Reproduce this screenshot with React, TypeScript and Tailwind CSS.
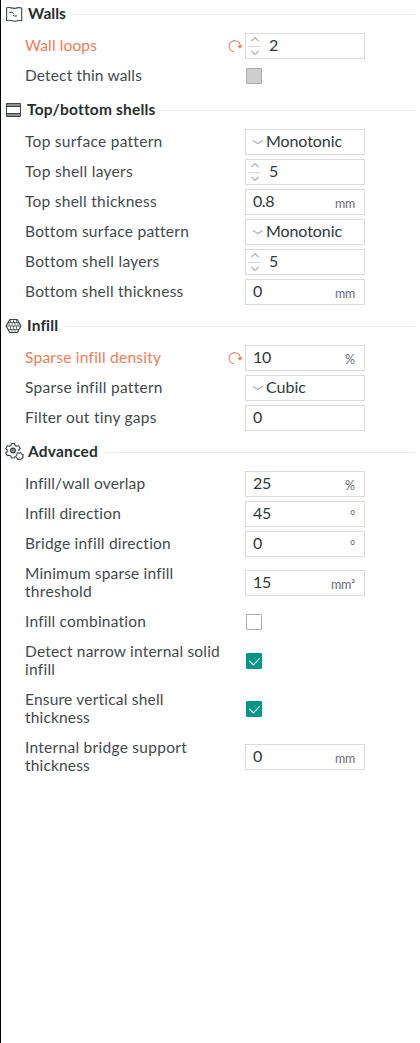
import { useLayoutEffect, useRef } from "react";

type LineProps = { text: string; width: number; className?: string };

/* One line of text, tracked so that it fills the given width. */
function Line({ text, width, className = "" }: LineProps) {
  const ref = useRef<HTMLSpanElement>(null);
  useLayoutEffect(() => {
    const el = ref.current;
    if (!el) return;
    el.style.letterSpacing = "0px";
    const natural = el.getBoundingClientRect().width;
    el.style.letterSpacing = `${(width - natural) / text.length}px`;
  }, [text, width]);
  return (
    <span className={`block w-max whitespace-nowrap ${className}`}>
      <span ref={ref} className="inline-block">{text}</span>
    </span>
  );
}

function WallsIcon() {
  return (
    <svg width="18" height="18" viewBox="0 0 18 18" fill="none" stroke="#3c4444" strokeWidth="1.1" strokeLinejoin="round">
      <path d="M1.600 2.700C5 1.600 7 4 10.500 3.200C13 2.400 14.500 2.500 16.700 3V15.700C13.500 14.700 12 17 8.500 16C6 15.300 4 14.800 1.600 15.500Z" />
      <path d="M4.300 7.300L7 7.200L8.600 8.700M8 10.200L9.500 11L12 10.900" strokeWidth="1" />
    </svg>
  );
}

function ShellsIcon() {
  return (
    <svg width="18" height="18" viewBox="0 0 18 18" fill="none">
      <path d="M1.500 2.500H15.500V15.500H1.500Z" stroke="#3c4444" />
      <path d="M2 3H15V5H2ZM2 13H15V15H2Z" fill="#8c9191" />
      <path d="M1.500 5.500H15.500M1.500 12.500H15.500" stroke="#3c4444" />
    </svg>
  );
}

function InfillIcon() {
  return (
    <svg width="18" height="18" viewBox="0 0 18 18" fill="none" stroke="#3c4444">
      <path d="M4.800 2.500H12.200L15.900 9L12.200 15.500H4.800L1.100 9Z" strokeWidth="1.200" strokeLinejoin="round" />
      <path d="M3 5.500H14M1.500 9H15.500M3 12.500H14M5.500 2.500V5.500M8.500 2.500V5.500M11.500 2.500V5.500M4 5.500V9M7 5.500V9M10 5.500V9M13 5.500V9M5.500 9V12.500M8.500 9V12.500M11.500 9V12.500M7 12.500V15.500M10 12.500V15.500" strokeWidth="1" strokeOpacity=".75" />
    </svg>
  );
}

function GearsIcon() {
  return (
    <svg width="20" height="20" viewBox="0 0 20 20" fill="none" stroke="#3c4444" strokeWidth="1.100" strokeLinejoin="round">
      <path d="M10.200 14.200L9.200 16H6.400L5.800 14L4.300 13.200L2.200 13.600L.8 11L2.200 9.500V8L.8 6.500L2.300 3.800L4.400 4.300L5.800 3.500L6.400 1.500H9.500L10.200 3.500L11.600 4.300L13.700 3.800L15.200 6.500L13.800 8V9" />
      <circle cx="8" cy="8.500" r="2.400" fill="#8c9191" />
      <path d="M12.500 10.700L14 11.300L15.500 10.500L16.500 12L18.200 12.500L17.700 14L18.200 15.700L16.500 16.200L15.500 17.700L14 17L12.400 17.400L11.800 15.900L10.500 14.500L11.700 13.200Z" fill="white" />
    </svg>
  );
}

type HeaderProps = { title: string; width: number; icon: React.ReactNode; className: string };

function Header({ title, width, icon, className }: HeaderProps) {
  return (
    <div className="flex h-[31px] items-center pb-[2px]">
      <div className="flex w-[23px] shrink-0 justify-start pb-[2px]">{icon}</div>
      <div className={`shrink-0 pb-[3px] ${className}`}>
        <Line text={title} width={width} className="text-[15.5px] font-bold leading-[18px] text-[#262e30]" />
      </div>
      <div className="h-px flex-1 bg-[#eeeeee]" />
    </div>
  );
}

type RowProps = {
  lines: [string, number][];
  changed?: boolean;
  children: React.ReactNode;
};

function Row({ lines, changed, children }: RowProps) {
  return (
    <div className={`flex items-center ${lines.length > 1 ? "h-[48px]" : "h-[30px]"}`}>
      <div className={`w-[202px] shrink-0 pb-[2px] pl-5 text-[15.5px] leading-[18px] ${changed ? "text-[#f57c56]" : "text-[#42494c]"}`}>
        {lines.map(([text, width]) => (
          <Line key={text} text={text} width={width} />
        ))}
      </div>
      <div className="flex w-[38px] shrink-0 justify-end pr-[2px]">
        {changed && (
          <svg width="16" height="16" viewBox="0 0 16 16" fill="none">
            <path d="M6.800 13.800A5.600 5.600 0 1 1 13.300 8" stroke="#f2754e" strokeWidth="1.100" />
            <path d="M10.500 7.500H15.500L13 10.800Z" fill="#f2754e" />
          </svg>
        )}
      </div>
      {children}
    </div>
  );
}

const boxClass = "flex h-[26px] w-[120px] items-center border border-[#dbdbdb] bg-white text-[16px] leading-[18px] text-[#30383a]";

function Field({ value, width, unit, unitWidth = 0 }: { value: string; width: number; unit?: string; unitWidth?: number }) {
  return (
    <div className={`${boxClass} justify-between pl-[7px] pr-[9px]`}>
      <Line text={value} width={width} className="pb-[2px]" />
      {unit && <Line text={unit} width={unitWidth} className="pt-[3px] text-[12.5px] leading-[14px] text-[#6b6b7b]" />}
    </div>
  );
}

function Spin({ value }: { value: string }) {
  return (
    <div className={`${boxClass} pl-[2px]`}>
      <svg width="14" height="24" viewBox="0 0 14 24" fill="none" className="mr-[7px]">
        <path d="M3.500 7L7 3.500L10.500 7M3.500 17L7 20.500L10.500 17" stroke="#acacac" strokeWidth="1.100" />
        <path d="M0 12.500H13" stroke="#dbdbdb" />
      </svg>
      <Line text={value} width={9} className="pb-[2px]" />
    </div>
  );
}

function Choice({ value, width }: { value: string; width: number }) {
  return (
    <div className={`${boxClass} pl-[6px]`}>
      <svg width="12" height="8" viewBox="0 0 12 8" fill="none" className="mr-[2px]">
        <path d="M.8 2.500L5.800 5.500L10.800 2.500" stroke="#acacac" strokeWidth="1.100" />
      </svg>
      <Line text={value} width={width} className="pb-[2px]" />
    </div>
  );
}

function Check({ state }: { state: "on" | "off" | "disabled" }) {
  const look = {
    on: "border-[#009688] bg-[#009688]",
    off: "border-[#acacac] bg-white",
    disabled: "border-[#acacac] bg-[#cecece]",
  }[state];
  return (
    <div className={`ml-px flex size-4 items-center justify-center rounded-[1px] border ${look}`}>
      {state === "on" && (
        <svg width="14" height="14" viewBox="0 0 14 14" fill="none">
          <path d="M2.300 7L6.300 10.800L12.700 4.300" stroke="#e8fffb" strokeWidth="1.200" />
        </svg>
      )}
    </div>
  );
}

export default function App() {
  return (
    <div className="flex h-[1043px] w-[420px] flex-col gap-[5px] border-l border-[#00000f] bg-white pl-1 pr-[5px] font-['Lato',sans-serif]">
      <section>
        <Header title="Walls" width={38} icon={<WallsIcon />} className="mr-[5px]" />
        <Row lines={[["Wall loops", 72]]} changed><Spin value="2" /></Row>
        <Row lines={[["Detect thin walls", 117]]}><Check state="disabled" /></Row>
      </section>
      <section>
        <Header title="Top/bottom shells" width={128} icon={<ShellsIcon />} className="-ml-px mr-[5px]" />
        <Row lines={[["Top surface pattern", 137]]}><Choice value="Monotonic" width={76} /></Row>
        <Row lines={[["Top shell layers", 108]]}><Spin value="5" /></Row>
        <Row lines={[["Top shell thickness", 132]]}><Field value="0.8" width={21} unit="mm" unitWidth={20} /></Row>
        <Row lines={[["Bottom surface pattern", 163]]}><Choice value="Monotonic" width={76} /></Row>
        <Row lines={[["Bottom shell layers", 134]]}><Spin value="5" /></Row>
        <Row lines={[["Bottom shell thickness", 158]]}><Field value="0" width={9} unit="mm" unitWidth={20} /></Row>
      </section>
      <section>
        <Header title="Infill" width={31} icon={<InfillIcon />} className="-ml-px mr-[6px]" />
        <Row lines={[["Sparse infill density", 136]]} changed><Field value="10" width={18} unit="%" unitWidth={10} /></Row>
        <Row lines={[["Sparse infill pattern", 137]]}><Choice value="Cubic" width={40} /></Row>
        <Row lines={[["Filter out tiny gaps", 132]]}><Field value="0" width={9} /></Row>
      </section>
      <section>
        <Header title="Advanced" width={70} icon={<GearsIcon />} className="mr-[5px]" />
        <Row lines={[["Infill/wall overlap", 120]]}><Field value="25" width={18} unit="%" unitWidth={10} /></Row>
        <Row lines={[["Infill direction", 96]]}><Field value="45" width={18} unit="°" unitWidth={5} /></Row>
        <Row lines={[["Bridge infill direction", 146]]}><Field value="0" width={9} unit="°" unitWidth={5} /></Row>
        <Row lines={[["Minimum sparse infill", 148], ["threshold", 67]]}><Field value="15" width={18} unit="mm²" unitWidth={24} /></Row>
        <Row lines={[["Infill combination", 121]]}><Check state="off" /></Row>
        <Row lines={[["Detect narrow internal solid", 195], ["infill", 30]]}><Check state="on" /></Row>
        <Row lines={[["Ensure vertical shell", 139], ["thickness", 65]]}><Check state="on" /></Row>
        <Row lines={[["Internal bridge support", 162], ["thickness", 65]]}><Field value="0" width={9} unit="mm" unitWidth={20} /></Row>
      </section>
    </div>
  );
}
